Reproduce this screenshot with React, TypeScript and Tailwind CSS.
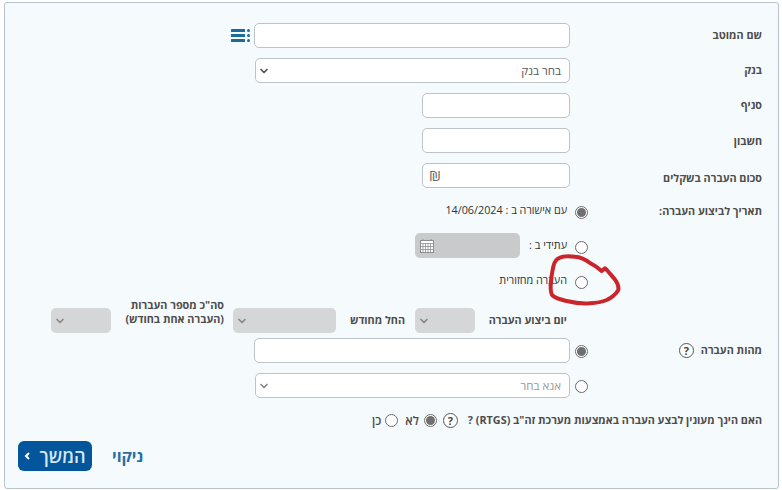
import { ChevronDown } from "lucide-react"

const Radio = ({ on = false }: { on?: boolean }) => (
  <span className="flex h-[13px] w-[13px] shrink-0 items-center justify-center rounded-full border border-[#6b6b6b] bg-white">
    {on && <span className="h-[9px] w-[9px] rounded-full bg-[#6f6f6f]" />}
  </span>
)

const Help = () => (
  <span className="flex h-[15px] w-[15px] shrink-0 items-center justify-center rounded-full border border-[#555] bg-white text-[11px] font-bold leading-none text-[#444]">
    ?
  </span>
)

const Field = ({ className = "" }: { className?: string }) => (
  <input className={`h-[25px] shrink-0 rounded-[5px] border border-[#bcc3c9] bg-white ${className}`} />
)

const Select = ({ text, muted, className = "" }: { text?: string; muted?: boolean; className?: string }) => (
  <div
    className={`flex h-[25px] shrink-0 items-center justify-between rounded-[5px] border border-[#bcc3c9] bg-white pl-[2px] pr-2 text-[11.5px] ${muted ? "text-[#999]" : "text-[#555]"} ${className}`}
  >
    <span>{text}</span>
    <ChevronDown className={`h-3 w-3 ${muted ? "text-[#888]" : "text-[#555]"}`} strokeWidth={3.5} />
  </div>
)

const DisabledSelect = ({ className = "" }: { className?: string }) => (
  <div className={`flex h-[25px] shrink-0 items-center justify-end rounded-[5px] bg-[#d5d6d8] pl-[3px] ${className}`}>
    <ChevronDown className="h-3 w-3 text-[#888]" strokeWidth={3.5} />
  </div>
)

const Label = ({ children, w = "w-[192px]", className = "" }: { children: React.ReactNode; w?: string; className?: string }) => (
  <div className={`shrink-0 text-[10.8px] font-bold text-[#4d4d4d] ${w} ${className}`}>{children}</div>
)

export default function App() {
  return (
    <div className="h-[490px] w-[782px] bg-white pl-[4px] pt-[2px] font-['Open_Sans','Liberation_Sans',sans-serif]">
      <div dir="rtl" className="relative h-[487px] w-[775px] rounded-[3px] border border-[#b7c3cb] bg-[#f5fafc] pr-[16px] pt-[20px]">
        <div className="flex flex-col gap-[10px]">
          <div className="flex items-center">
            <Label>שם המוטב</Label>
            <Field className="w-[316px]" />
            <svg width="20" height="13" viewBox="0 0 20 13" className="mr-[3px] text-[#1c6a9c]">
              <g fill="currentColor">
                <rect x="0" y="0" width="14" height="3" rx="0.5" />
                <rect x="0" y="5" width="14" height="3" rx="0.5" />
                <rect x="0" y="10" width="14" height="3" rx="0.5" />
                <rect x="16" y="0" width="3" height="3" rx="1.5" />
                <rect x="16" y="5" width="3" height="3" rx="1.5" />
                <rect x="16" y="10" width="3" height="3" rx="1.5" />
              </g>
            </svg>
          </div>
          <div className="flex items-center">
            <Label>בנק</Label>
            <Select text="בחר בנק" className="w-[315px]" />
          </div>
          <div className="flex items-center">
            <Label>סניף</Label>
            <Field className="w-[148px]" />
          </div>
          <div className="flex items-center">
            <Label className="pt-[1px]">חשבון</Label>
            <Field className="w-[148px]" />
          </div>
          <div className="flex items-center">
            <Label className="pt-[5px]">סכום העברה בשקלים</Label>
            <div className="flex h-[25px] w-[148px] items-center justify-end rounded-[5px] border border-[#bcc3c9] bg-white pl-[6px] text-[15px] text-[#666]">
              ₪
            </div>
          </div>
          <div className="flex h-[25px] items-center">
            <Label w="w-[174px]" className="pt-[1px]">תאריך לביצוע העברה:</Label>
            <div className="mt-[3px]"><Radio on /></div>
            <span className="mr-[8px] text-[10.8px] text-[#333]">עם אישורה ב : 14/06/2024</span>
          </div>
          <div className="flex h-[25px] items-center">
            <div className="w-[174px] shrink-0" />
            <div className="mt-[3px]"><Radio /></div>
            <span className="mr-[8px] w-[47px] text-[10.8px] text-[#333]">עתידי ב :</span>
            <div className="flex h-[25px] w-[105px] items-center justify-end rounded-[5px] bg-[#c9cacc] pl-[5px]">
              <svg width="14" height="14" viewBox="0 0 14 14" fill="none" stroke="#8f8f8f">
                <rect x="0.5" y="1.5" width="13" height="12" fill="#fff" />
                <path d="M0 4.5h14M3 4.5v9M5.5 4.5v9M8 4.5v9M10.5 4.5v9M0 7.5h14M0 10.5h14" strokeWidth="0.8" />
                <path d="M3 0v2M11 0v2" />
              </svg>
            </div>
          </div>
          <div className="flex h-[25px] items-center">
            <div className="w-[174px] shrink-0" />
            <div className="mt-[3px]"><Radio /></div>
            <span className="mr-[8px] text-[10.8px] text-[#333]">העברה מחזורית</span>
          </div>
        </div>

        <div className="mt-[15px] flex h-[25px] items-center">
          <div className="w-[195px] shrink-0" />
          <div className="w-[92px] shrink-0 text-[10.8px] font-bold text-[#4d4d4d]">יום ביצוע העברה</div>
          <DisabledSelect className="w-[60px]" />
          <div className="w-[79px] shrink-0 pr-[10px] text-[10.8px] font-bold whitespace-nowrap text-[#4d4d4d]">החל מחודש</div>
          <DisabledSelect className="w-[103px]" />
          <div className="w-[122px] shrink-0 pb-[18px] pr-[9px] text-[10.8px] leading-[14px] font-bold whitespace-nowrap text-[#4d4d4d]">
            סה"כ מספר העברות
            <br />
            (העברה אחת בחודש)
          </div>
          <DisabledSelect className="w-[60px]" />
        </div>

        <div className="mt-[5px] flex h-[25px] items-center">
          <div className="flex w-[174px] shrink-0 items-center">
            <span className="text-[10.8px] font-bold text-[#4d4d4d]">מהות העברה</span>
            <span className="mr-[7px]"><Help /></span>
          </div>
          <div className="mt-[2px]"><Radio on /></div>
          <Field className="mr-[5px] w-[316px]" />
        </div>
        <div className="mt-[10px] flex h-[25px] items-center">
          <div className="w-[174px] shrink-0" />
          <div className="mt-[2px]"><Radio /></div>
          <Select text="אנא בחר" muted className="mr-[5px] w-[315px]" />
        </div>

        <div className="mt-[10px] flex h-[25px] items-center text-[10.8px] font-bold text-[#4d4d4d]">
          <span>האם הינך מעונין לבצע העברה באמצעות מערכת זה"ב (RTGS) ?</span>
          <span className="mr-[10px]"><Help /></span>
          <span className="mr-[6px]"><Radio on /></span>
          <span className="mr-[5px] text-[12px] font-semibold">לא</span>
          <span className="mr-[7px]"><Radio /></span>
          <span className="mr-[4px] text-[12px] font-semibold">כן</span>
        </div>

        <div className="mt-[8px] flex items-center justify-end gap-[20px] pl-[13px]">
          <span className="text-[16px] font-bold text-[#2a6ea6]">ניקוי</span>
          <button className="flex h-[30px] w-[74px] items-center justify-center gap-[9px] rounded-[6px] bg-[#03569b] text-[18px] font-semibold text-[#d9e8f3]">
            <span>המשך</span>
            <svg width="6" height="8" viewBox="0 0 6 8" fill="none" stroke="#fff" strokeWidth="2">
              <path d="M5 1 2 4l3 3" />
            </svg>
          </button>
        </div>

        <svg
          dir="ltr"
          viewBox="0 0 80 60"
          width="80"
          height="60"
          className="pointer-events-none absolute left-[540px] top-[247px]"
          fill="none"
          stroke="#c9252b"
          strokeWidth="4"
          strokeLinecap="round"
          strokeLinejoin="round"
        >
          <path d="M56.7 21 C52 17 49 15 45 13 C40 9 36 7 30 6.7 C24 6 18 6 15 7.7 C11 9 9 13 8.3 16.7 C7 23 6 29 5.7 35 C5.5 40 6 44 7.7 45.7 C12 49 17 50 21.7 51 C30 53 38 54 45 53.3 C52 53 57 52 61.7 50 C66 48 71 44 73.3 40 C74 36 72 32 69 28.3 C66 25 63 21 60 18.3 L56.7 21" />
        </svg>
      </div>
    </div>
  )
}
